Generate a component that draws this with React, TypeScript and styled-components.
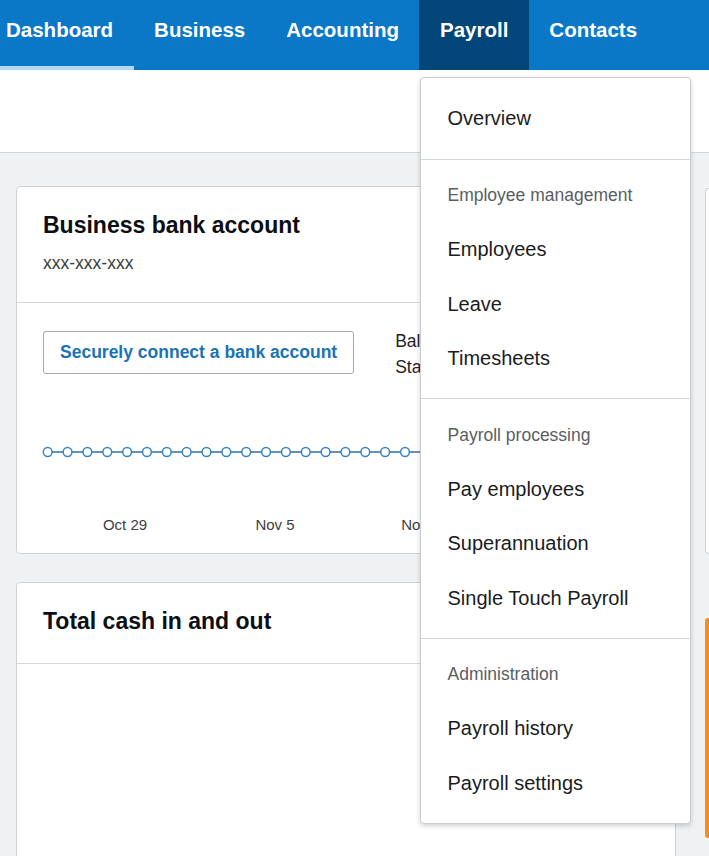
import React from "react";
import styled, { createGlobalStyle } from "styled-components";

const Global = createGlobalStyle`
  html, body { margin: 0; padding: 0; }
  body {
    font-family: "Liberation Sans", Arial, sans-serif;
    background: #eff1f3;
    overflow: hidden;
  }
  * { box-sizing: border-box; }
`;

const Page = styled.div`
  min-height: 100vh;
  background: #eff1f3;
`;

const Nav = styled.nav`
  display: flex;
  height: 70px;
  background: #0a78c6;
  position: relative;
  z-index: 5;
`;

const Tab = styled.div<{ $active?: boolean; $open?: boolean; $first?: boolean }>`
  position: relative;
  display: flex;
  align-items: flex-start;
  padding: 18px 20.5px 0 ${(p) => (p.$first ? "6px" : "20.5px")};
  font-size: 20.5px;
  font-weight: bold;
  color: #ffffff;
  background: ${(p) => (p.$open ? "#03467a" : "transparent")};
  box-shadow: ${(p) => (p.$active ? "inset 0 -4px 0 #b4daf2" : "none")};
  white-space: nowrap;
`;

const Menu = styled.div`
  position: absolute;
  top: 77px;
  left: 1px;
  width: 271px;
  background: #ffffff;
  border: 1px solid #c9cdd1;
  border-radius: 4px;
  box-shadow: 0 2px 5px rgba(0, 0, 0, 0.18);
  font-weight: normal;
`;

const MenuSection = styled.div<{ $first?: boolean }>`
  padding: ${(p) => (p.$first ? "13px 0" : "14px 0 12px")};
  border-top: ${(p) => (p.$first ? "none" : "1px solid #d3d6d9")};
`;

const GroupLabel = styled.div`
  height: 44px;
  margin-bottom: 5px;
  display: flex;
  align-items: center;
  padding-left: 26px;
  font-size: 17.5px;
  color: #595e65;
`;

const MenuItem = styled.div`
  height: 54.5px;
  display: flex;
  align-items: center;
  padding-left: 26px;
  font-size: 20px;
  color: #1a1c1e;
`;

const Header = styled.div`
  height: 83px;
  background: #ffffff;
  border-bottom: 1px solid #d3d6d9;
`;

const Content = styled.div`
  display: grid;
  grid-template-columns: 660px 1fr;
  column-gap: 29px;
  padding: 33px 0 0 16px;
`;

const Column = styled.div`
  display: flex;
  flex-direction: column;
  gap: 28px;
`;

const Card = styled.section`
  background: #ffffff;
  border: 1px solid #cfd2d5;
  border-radius: 4px;
  overflow: hidden;
`;

const CardHeader = styled.div`
  padding: 25px 26px 28px;
  border-bottom: 1px solid #d6d9dc;
`;

const Title = styled.h2`
  margin: 0;
  font-size: 23px;
  line-height: 27px;
  font-weight: bold;
  color: #0b0e12;
`;

const Sub = styled.div`
  margin-top: 14px;
  font-size: 17.5px;
  line-height: 21px;
  color: #3a3d41;
`;

const CardBody = styled.div<{ $minHeight?: number }>`
  padding: 28px 26px 13px;
  ${(p) => (p.$minHeight ? `min-height: ${p.$minHeight}px;` : "")}
`;

const ActionRow = styled.div`
  display: flex;
  align-items: flex-start;
  gap: 41px;
`;

const ConnectButton = styled.button`
  height: 43px;
  padding: 0 16px;
  border: 1px solid #a3a7ab;
  border-radius: 3px;
  background: #ffffff;
  font-family: "Liberation Sans", Arial, sans-serif;
  font-size: 17.5px;
  font-weight: bold;
  color: #1a73b4;
  white-space: nowrap;
`;

const Balances = styled.div`
  margin-top: -3px;
  font-size: 17.5px;
  line-height: 26px;
  color: #1f2226;
  white-space: nowrap;
`;

const ChartSvg = styled.svg`
  display: block;
  margin: 15px -26px 0;
  width: 658px;
  height: 145px;
`;

const RightCard = styled.section`
  height: 366px;
  margin-top: 2px;
  background: #ffffff;
  border: 1px solid #cfd2d5;
  border-right: none;
  border-radius: 4px 0 0 4px;
`;

const Notice = styled.div`
  height: 220px;
  margin-top: 36px;
  background: #ffffff;
  border-left: 4px solid #f0901e;
  border-radius: 3px 0 0 3px;
`;

const points = Array.from({ length: 32 }, (_, i) => 30.7 + i * 19.85);
const labels = [
  { x: 108, t: "Oct 29" },
  { x: 258, t: "Nov 5" },
  { x: 408, t: "Nov 12" },
  { x: 558, t: "Nov 19" },
];

const menu = [
  { label: null, items: ["Overview"] },
  { label: "Employee management", items: ["Employees", "Leave", "Timesheets"] },
  { label: "Payroll processing", items: ["Pay employees", "Superannuation", "Single Touch Payroll"] },
  { label: "Administration", items: ["Payroll history", "Payroll settings"] },
];

export default function App() {
  return (
    <Page>
      <Global />
      <Nav>
        <Tab $first $active>Dashboard</Tab>
        <Tab>Business</Tab>
        <Tab>Accounting</Tab>
        <Tab $open>
          Payroll
          <Menu>
            {menu.map((s, i) => (
              <MenuSection key={i} $first={i === 0}>
                {s.label && <GroupLabel>{s.label}</GroupLabel>}
                {s.items.map((it) => (
                  <MenuItem key={it}>{it}</MenuItem>
                ))}
              </MenuSection>
            ))}
          </Menu>
        </Tab>
        <Tab>Contacts</Tab>
      </Nav>
      <Header />
      <Content>
        <Column>
          <Card>
            <CardHeader>
              <Title>Business bank account</Title>
              <Sub>xxx-xxx-xxx</Sub>
            </CardHeader>
            <CardBody>
              <ActionRow>
                <ConnectButton>Securely connect a bank account</ConnectButton>
                <Balances>
                  <div>Balance in Xero</div>
                  <div>Statement balance</div>
                </Balances>
              </ActionRow>
              <ChartSvg viewBox="0 0 658 145">
                <line x1={26} y1={57} x2={658} y2={57} stroke="#2f6ea6" strokeWidth={1.6} />
                {points.map((x) => (
                  <circle key={x} cx={x} cy={57} r={4.4} fill="#ffffff" stroke="#3a84c0" strokeWidth={1.5} />
                ))}
                {labels.map((l) => (
                  <text
                    key={l.t}
                    x={l.x}
                    y={135}
                    textAnchor="middle"
                    fontSize={15}
                    fill="#3b3f44"
                    fontFamily="'Liberation Sans', Arial, sans-serif"
                  >
                    {l.t}
                  </text>
                ))}
              </ChartSvg>
            </CardBody>
          </Card>
          <Card>
            <CardHeader>
              <Title>Total cash in and out</Title>
            </CardHeader>
            <CardBody $minHeight={260} />
          </Card>
        </Column>
        <Column>
          <RightCard />
          <Notice />
        </Column>
      </Content>
    </Page>
  );
}
